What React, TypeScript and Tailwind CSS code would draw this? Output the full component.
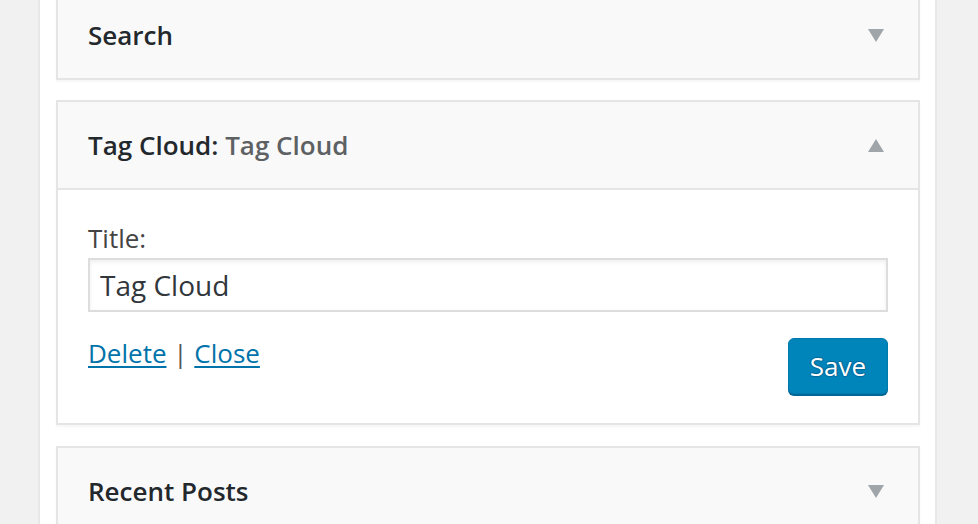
const font = { fontFamily: '"Open Sans", "Liberation Sans", sans-serif' };

function Arrow({ up }: { up?: boolean }) {
  return (
    <svg width="16" height="13" viewBox="0 0 16 13" className="shrink-0">
      <polygon points={up ? "8,0 16,13 0,13" : "0,0 16,0 8,13"} fill="#a0a5aa" />
    </svg>
  );
}

function WidgetTop({ title, sub, up }: { title: string; sub?: string; up?: boolean }) {
  return (
    <div className="flex h-[86px] items-center justify-between bg-[#f9f9f9] pl-[30px] pr-[34px]">
      <h3 className="-mt-[1px] text-[26px] font-semibold leading-[36px] text-[#23282d]">
        {title}
        {sub && <span className="text-[#5e6163]"> {sub}</span>}
      </h3>
      <Arrow up={up} />
    </div>
  );
}

export default function App() {
  return (
    <div className="flex h-[524px] w-[978px] overflow-hidden bg-[#f1f1f1]" style={font}>
      <div className="w-[38px] shrink-0" />
      <div className="w-[899px] shrink-0 border-x-2 border-[#e8e8e8] bg-white pl-[16px] pr-[15px]">
        <div className="-mt-[10px] flex flex-col">
          <div className="border-2 border-[#e5e5e5] shadow-[0_2px_2px_rgba(0,0,0,0.04)]">
            <WidgetTop title="Search" />
          </div>

          <div className="mt-[20px] border-2 border-[#e5e5e5] shadow-[0_2px_2px_rgba(0,0,0,0.04)]">
            <WidgetTop title="Tag Cloud:" sub="Tag Cloud" up />
            <div className="border-t-2 border-[#e5e5e5] bg-white px-[30px] pb-[29px] pt-[30px]">
              <label className="block text-[26px] leading-[36px] text-[#444]">Title:</label>
              <input
                className="mt-[2px] block h-[54px] w-full border-2 border-[#dddddd] bg-white pl-[10px] text-[28px] text-[#32373c] shadow-[inset_0_2px_4px_rgba(0,0,0,0.07)] outline-none"
                defaultValue="Tag Cloud"
                style={font}
              />
              <div className="mt-[23px] flex items-start justify-between">
                <div className="text-[26px] leading-[36px] text-[#555]">
                  <a href="#" className="text-[#0073aa] underline underline-offset-[3px]">
                    Delete
                  </a>{" "}
                  |{" "}
                  <a href="#" className="text-[#0073aa] underline underline-offset-[3px]">
                    Close
                  </a>
                </div>
                <button
                  className="mt-[3px] flex h-[56px] w-[100px] items-center justify-center rounded-[6px] border border-[#0079ad] bg-[#0085ba] text-[26px] leading-[36px] text-white shadow-[0_2px_0_#006799] [text-shadow:0_-1px_1px_#006799,1px_0_1px_#006799,0_1px_1px_#006799,-1px_0_1px_#006799]"
                  style={font}
                >
                  Save
                </button>
              </div>
            </div>
          </div>

          <div className="mt-[21px] border-2 border-[#e5e5e5] shadow-[0_2px_2px_rgba(0,0,0,0.04)]">
            <WidgetTop title="Recent Posts" />
          </div>
        </div>
      </div>
    </div>
  );
}
